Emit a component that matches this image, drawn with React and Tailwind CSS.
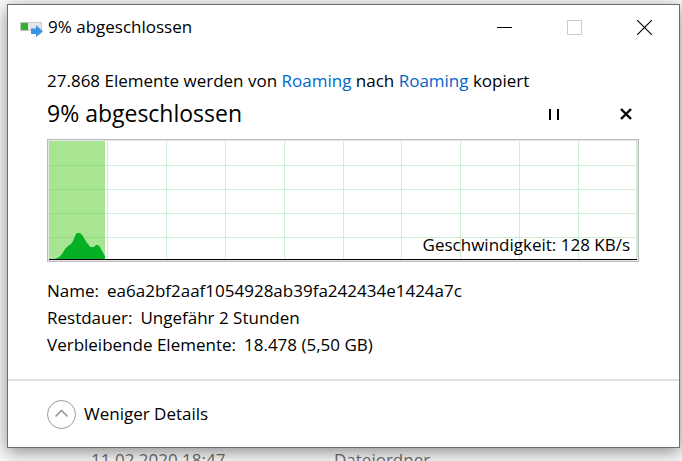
import React from 'react';

const details = [
  { label: 'Name:', value: 'ea6a2bf2aaf1054928ab39fa242434e1424a7c' },
  { label: 'Restdauer:', value: 'Ungefähr 2 Stunden' },
  { label: 'Verbleibende Elemente:', value: '18.478 (5,50 GB)' },
];

const columns = [58, 117, 176, 235, 294, 352, 411, 470, 529, 587];
const rows = [24, 48, 72, 96];

const CopyIcon = () => (
  <svg width="24" height="20" viewBox="0 0 24 20" aria-hidden="true">
    <rect x="0.5" y="5.5" width="21" height="8" fill="#e6e6e6" stroke="#c8c8c8" />
    <rect x="1" y="6" width="7" height="7" fill="#30b030" />
    <path d="M11 11.500h5V8l7 6.500-7 5.500v-3h-5z" fill="#3a96e4" />
  </svg>
);

const TitleBar = () => (
  <header className="flex h-11 items-center pl-3">
    <CopyIcon />
    <h1 className="ml-1 flex-1 text-[17px] leading-6">9% abgeschlossen</h1>
    <button type="button" aria-label="Minimieren" className="flex h-11 w-[70px] items-center justify-center">
      <svg width="15" height="15" viewBox="0 0 15 15" shapeRendering="crispEdges">
        <rect y="7" width="15" height="1" fill="#000" />
      </svg>
    </button>
    <button type="button" disabled aria-label="Maximieren" className="flex h-11 w-[70px] items-center justify-center">
      <svg width="15" height="15" viewBox="0 0 15 15" fill="none" stroke="#ccc" shapeRendering="crispEdges">
        <rect x="0.5" y="0.5" width="14" height="14" />
      </svg>
    </button>
    <button type="button" aria-label="Schließen" className="flex h-11 w-[70px] items-center justify-center">
      <svg width="15" height="15" viewBox="0 0 15 15" stroke="#000" strokeWidth="1.1">
        <path d="M0 0l15 15M15 0L0 15" />
      </svg>
    </button>
  </header>
);

const SpeedChart = () => (
  <div className="relative mt-2 border border-[#bbb]">
    <div className="border border-[#e6e6e6]">
      <svg
        className="block h-[119px] w-full"
        viewBox="0 0 588 119"
        preserveAspectRatio="none"
        aria-hidden="true"
      >
        <g fill="#cdeed3" shapeRendering="crispEdges">
          {columns.map((x) => (
            <rect key={x} x={x} y="0" width="1" height="118" />
          ))}
          {rows.map((y) => (
            <rect key={y} x="0" y={y} width="587" height="1" />
          ))}
        </g>
        <rect width="56" height="118" fill="#a8e592" />
        <g fill="#93da80" shapeRendering="crispEdges">
          {rows.map((y) => (
            <rect key={y} x="0" y={y} width="56" height="1" />
          ))}
        </g>
        <path
          d="M6 118l4-2 3-3 3-5 3-3 3-2 2-3 3-7 1-1h3l2 2 2 3 3 5 2 2 1 2h4l2-2h2l2 2 2 4 3 5v3z"
          fill="#06b025"
        />
        <rect y="118" width="588" height="1" fill="#000" />
      </svg>
    </div>
    <p className="absolute right-2 bottom-1 text-[17px] leading-6">Geschwindigkeit: 128 KB/s</p>
  </div>
);

const CopyDialog = () => (
  <main className="relative z-10 mr-[2px] ml-[7px] border border-[#6e6e6e] bg-white shadow-[0_4px_16px_rgba(0,0,0,0.45)]">
    <TitleBar />

    <section className="pt-5 pr-10 pb-[21px] pl-[39px]">
      <p className="text-[17px] leading-6">
        27.868 Elemente werden von <a href="#quelle" className="text-[#0066cc]">Roaming</a> nach{' '}
        <a href="#ziel" className="text-[#0066cc]">Roaming</a> kopiert
      </p>

      <div className="mt-1 flex items-center">
        <h2 className="flex-1 pb-[2px] text-[23px] leading-8">9% abgeschlossen</h2>
        <button type="button" aria-label="Anhalten" className="flex h-8 w-12 items-center justify-center">
          <svg width="10" height="11" viewBox="0 0 10 11" shapeRendering="crispEdges">
            <path d="M0 0h2v11H0zM8 0h2v11H8z" />
          </svg>
        </button>
        <button type="button" aria-label="Abbrechen" className="mr-px ml-9 flex h-8 w-6 items-center justify-center">
          <svg width="12" height="12" viewBox="0 0 12 12" stroke="#000" strokeWidth="2.4">
            <path d="M1 1l10 10M11 1L1 11" />
          </svg>
        </button>
      </div>

      <SpeedChart />

      <dl className="mt-[15px] text-[17px] leading-[27px]">
        {details.map((item) => (
          <div key={item.label} className="flex gap-2">
            <dt>{item.label}</dt>
            <dd>{item.value}</dd>
          </div>
        ))}
      </dl>
    </section>

    <footer className="flex h-[68px] items-center border-t-2 border-[#e1e1e1] pl-[39px]">
      <button type="button" className="flex items-center gap-2 text-[17px] leading-6">
        <svg width="29" height="29" viewBox="0 0 29 29" fill="none" stroke="#999" aria-hidden="true">
          <circle cx="14.500" cy="14.500" r="14" />
          <path d="M8.500 16.500l6-6 6 6" strokeWidth="1.6" />
        </svg>
        Weniger Details
      </button>
    </footer>
  </main>
);

export default function App() {
  return (
    <div className="h-screen overflow-hidden bg-[#fafafa] pt-1 font-['Open_Sans','Noto_Sans',sans-serif] text-black">
      <CopyDialog />
      <div className="flex pl-[91px] text-[17px] leading-6 text-[#6d6d6d]">
        <span className="w-[243px]">11.02.2020 18:47</span>
        <span>Dateiordner</span>
      </div>
    </div>
  );
}
